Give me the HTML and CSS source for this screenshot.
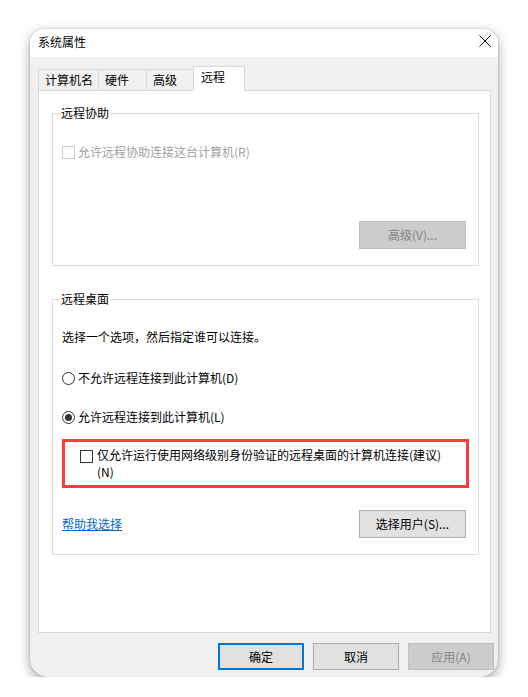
FILE: index.html
```html
<!DOCTYPE html>
<html lang="zh-CN">
<head>
<meta charset="utf-8">
<title>系统属性</title>
<link rel="stylesheet" href="styles.css">
</head>
<body>
<div class="window">
  <div class="titlebar">
    <span class="title">系统属性</span>
    <svg class="close" width="12" height="12" viewBox="0 0 12 12"><path d="M0.5 0.5 L11.5 11.5 M11.5 0.5 L0.5 11.5" stroke="#000" stroke-width="1" fill="none"/></svg>
  </div>
  <div class="body">
    <div class="tabs">
      <div class="tab t1">计算机名</div>
      <div class="tab t2">硬件</div>
      <div class="tab t3">高级</div>
      <div class="tab t4 active">远程</div>
    </div>
    <div class="panel">
      <fieldset class="group g1">
        <legend>远程协助</legend>
        <div class="check disabled"><span class="box"></span><span>允许远程协助连接这台计算机(R)</span></div>
        <div class="btn-row"><span class="btn disabled">高级(V)...</span></div>
      </fieldset>
      <fieldset class="group g2">
        <legend>远程桌面</legend>
        <p class="hint">选择一个选项，然后指定谁可以连接。</p>
        <div class="radio r1"><span class="circle"></span><span>不允许远程连接到此计算机(D)</span></div>
        <div class="radio r2"><span class="circle checked"></span><span>允许远程连接到此计算机(L)</span></div>
        <div class="highlight">
          <div class="check nla"><span class="box"></span><span>仅允许运行使用网络级别身份验证的远程桌面的计算机连接(建议)<br>(N)</span></div>
        </div>
        <div class="link-row"><a class="link">帮助我选择</a><span class="btn">选择用户(S)...</span></div>
      </fieldset>
    </div>
    <div class="footer">
      <span class="btn fbtn default">确定</span>
      <span class="btn fbtn">取消</span>
      <span class="btn fbtn disabled">应用(A)</span>
    </div>
  </div>
</div>
</body>
</html>
```
FILE: styles.css
```css
body {
  margin: 0;
  background: #fff;
  font-family: "Noto Sans CJK SC", "Microsoft YaHei", sans-serif;
  font-size: 12px;
  line-height: 16px;
  color: #000;
}
.window {
  margin: 29px 0 0 30px;
  width: 468px;
  height: 648px;
  border-radius: 14px 14px 18px 18px;
  overflow: hidden;
  box-shadow: 0 4px 12px rgba(0,0,0,.35), 0 0 2px rgba(0,0,0,.25);
  display: flex;
  flex-direction: column;
  background: #f0f0f0;
}
.titlebar {
  height: 28px;
  box-sizing: border-box;
  background: #fff;
  display: flex;
  align-items: flex-start;
  padding: 5px 7px 0 8px;
  flex: none;
}
.title { flex: 1; }
.close { margin-top: 1px; display: block; }
.body {
  flex: 1;
  min-height: 0;
  display: flex;
  flex-direction: column;
  padding: 9px 7px 7px 8px;
}
.tabs {
  display: flex;
  align-items: flex-end;
  height: 24px;
  flex: none;
}
.tab {
  box-sizing: border-box;
  height: 21px;
  border: 1px solid #d9d9d9;
  border-bottom: none;
  background: #f0f0f0;
  padding-left: 6px;
  line-height: 19px;
  margin-left: -1px;
}
.t1 { width: 61px; margin-left: 0; }
.t2 { width: 49px; }
.t3 { width: 48px; }
.t4 {
  width: 52px;
  height: 25px;
  margin-bottom: -1px;
  background: #fff;
  position: relative;
  z-index: 1;
  line-height: 20px;
  padding-left: 7px;
}
.panel {
  flex: 1;
  min-height: 0;
  background: #fff;
  border: 1px solid #d9d9d9;
  padding: 14px 11px 0 13px;
}
.group {
  margin: 0;
  border: 1px solid #dcdcdc;
  padding: 0 12px 16px 9px;
  min-width: 0;
}
.group legend {
  padding: 0 1px;
  margin-left: -2px;
  line-height: 16px;
}
.check, .radio {
  display: flex;
  align-items: center;
  gap: 3px;
  height: 16px;
}
.box {
  width: 13px;
  height: 13px;
  box-sizing: border-box;
  border: 1px solid #333;
  background: #fff;
  flex: none;
}
.disabled { color: #a0a0a0; }
.check.disabled .box { border-color: #cccccc; }
.g1 .check { margin-top: 23px; }
.btn-row {
  display: flex;
  justify-content: flex-end;
  margin-top: 61px;
}
.btn {
  box-sizing: border-box;
  width: 107px;
  height: 28px;
  display: flex;
  align-items: center;
  justify-content: center;
  background: #e1e1e1;
  border: 1px solid #adadad;
  color: #000;
}
.btn.disabled {
  background: #cccccc;
  border-color: #bfbfbf;
  color: #848484;
}
.g2 { margin-top: 25px; }
.hint { margin: 22px 0 0; }
.r1 { margin-top: 25px; }
.r2 { margin-top: 23px; }
.circle {
  width: 13px;
  height: 13px;
  border-radius: 50%;
  border: 1px solid #333;
  box-sizing: border-box;
  display: flex;
  align-items: center;
  justify-content: center;
  flex: none;
}
.circle.checked::after {
  content: "";
  width: 7px;
  height: 7px;
  border-radius: 50%;
  background: #333;
}
.highlight {
  margin-top: 14px;
  width: 407px;
  box-sizing: border-box;
  border: 3px solid #ff3b3b;
  padding: 4px 0 5px 15px;
}
.nla {
  align-items: flex-start;
  gap: 4px;
  height: auto;
  line-height: 17px;
}
.nla .box { margin-top: 4px; }
.link-row {
  margin-top: 22px;
  display: flex;
  justify-content: space-between;
  align-items: center;
}
.link {
  color: #0066cc;
  text-decoration: underline;
}
.footer {
  display: flex;
  justify-content: flex-end;
  gap: 9px;
  margin-top: 10px;
  margin-right: -3px;
  flex: none;
}
.fbtn {
  width: 86px;
  height: 27px;
}
.fbtn.default { border: 2px solid #0078d7; }
```
